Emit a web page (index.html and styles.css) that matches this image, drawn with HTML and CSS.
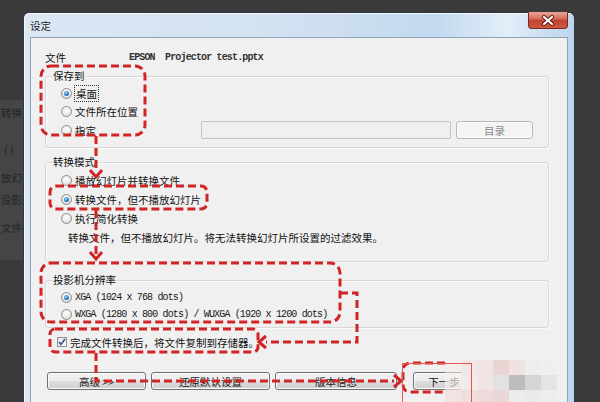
FILE: index.html
```html
<!DOCTYPE html>
<html>
<head>
	<meta charset="utf-8">
	<title>设定</title>
	<link rel="stylesheet" href="styles.css">
</head>
<body>
	<div class="desk">
		<div class="behind">
			<p class="b1">转换</p>
			<p class="b2">( )</p>
			<p class="b3">放幻</p>
			<p class="b4">设影</p>
			<p class="b5">文件</p>
		</div>
		<div class="window">
			<div class="titlebar">
				<span class="title">设定</span>
				<span class="close">
					<svg width="14" height="11" viewBox="0 0 14 11">
						<path d="M3 2L11 9M11 2L3 9" stroke="#5a1a10" stroke-width="4" stroke-linecap="round"/>
						<path d="M3 2L11 9M11 2L3 9" stroke="#fff" stroke-width="2.2" stroke-linecap="round"/>
					</svg>
				</span>
			</div>
			<div class="client">
				<div class="filerow">
					<span class="filelabel">文件</span>
					<span class="mono">EPSON  Projector test.pptx</span>
				</div>

				<div class="group g1">
					<div class="legend">保存到</div>
					<div class="row"><span class="radio on"></span><span class="focus">桌面</span></div>
					<div class="row"><span class="radio"></span>文件所在位置</div>
					<div class="row r3"><span class="radio"></span>指定<span class="textbox"></span><span class="btn off">目录</span></div>
				</div>

				<div class="group g2">
					<div class="legend">转换模式</div>
					<div class="row"><span class="radio"></span>播放幻灯片并转换文件</div>
					<div class="row"><span class="radio on"></span>转换文件，但不播放幻灯片</div>
					<div class="row"><span class="radio"></span>执行简化转换</div>
					<div class="row desc">转换文件，但不播放幻灯片。将无法转换幻灯片所设置的过滤效果。</div>
				</div>

				<div class="group g3">
					<div class="legend">投影机分辨率</div>
					<div class="row"><span class="radio on"></span><span class="mono">XGA (1024 x 768 dots)</span></div>
					<div class="row"><span class="radio"></span><span class="mono">WXGA (1280 x 800 dots) / WUXGA (1920 x 1200 dots)</span></div>
				</div>

				<div class="checkrow">
					<span class="check">
						<svg width="8" height="8" viewBox="0 0 8 8"><path d="M1 4L3 6.5L7 1" fill="none" stroke="#3b4f8c" stroke-width="1.6"/></svg>
					</span>
					完成文件转换后，将文件复制到存储器。
				</div>

				<div class="buttons">
					<span class="btn w1">高级 &gt;&gt;</span>
					<span class="btn w2">还原默认设置</span>
					<span class="btn w3">版本信息</span>
					<span class="btn w4">下一步</span>
				</div>
			</div>
		</div>
	</div>

	<div class="mosaic">
		<i style="background:rgba(250,236,236,.55)"></i><i style="background:#f3e6e6"></i><i style="background:#f1e3e3"></i><i style="background:#ead3d3"></i><i style="background:#f0e2e2"></i><i style="background:#ededed"></i><i style="background:#efefef"></i>
		<i style="background:rgba(250,240,240,.65)"></i><i style="background:#f4eaea"></i><i style="background:#f1e4e4"></i><i style="background:#e2e2e2"></i><i style="background:#bdbdbd"></i><i style="background:#d5d5d5"></i><i style="background:#e4e4e4"></i>
		<i style="background:#f3e3e3"></i><i style="background:#f0dddd"></i><i style="background:#eedada"></i><i style="background:#e9d6d6"></i><i style="background:#ececec"></i><i style="background:#eaeaea"></i><i style="background:#ededed"></i>
	</div>

	<svg class="marks" width="600" height="402" viewBox="0 0 600 402">
		<g fill="none" stroke="#d12424" stroke-width="3" stroke-dasharray="8 4">
			<rect x="41" y="66" width="104" height="69" rx="10"/>
			<path d="M96 136V172"/>
			<rect x="50" y="186" width="157" height="23" rx="6"/>
			<path d="M96 210V254"/>
			<rect x="41" y="263" width="299" height="59" rx="10"/>
			<path d="M340 293H357V342H266"/>
			<rect x="50" y="329" width="208" height="23" rx="5"/>
			<path d="M96 353V381H394"/>
			<path d="M445 363H411Q403 363 403 371V384Q403 392 411 392H445"/>
		</g>
		<g fill="none" stroke="#d12424" stroke-width="3">
			<path d="M90 170L96 177L102 170"/>
			<path d="M90 252L96 259L102 252"/>
			<path d="M266 336L259 342L266 348"/>
			<path d="M394 375L401 381L394 387"/>
		</g>
		<rect x="402.5" y="363.5" width="69" height="45" fill="none" stroke="#e25656"/>
	</svg>
</body>
</html>
```

FILE: styles.css
```css
* {
	box-sizing: border-box;
}
body {
	margin: 0;
	width: 600px; height: 402px;
	overflow: hidden; position: relative;
	background: #3a3a3a;
	font-family: "Noto Sans CJK SC", sans-serif;
	font-size: 10.5px; color: #111;
}
.desk {
	display: flex;
	padding-top: 12px;
	height: 402px;
}

/* desktop text behind the dialog */
.behind {
	width: 23px; flex: none;
	margin-top: 88px; height: 160px;
	background: #454545; color: #242424;
	overflow: hidden;
}
.behind p {
	margin: 0;
	height: 14px; line-height: 14px;
	white-space: nowrap;
}
.b1 { margin-top: 6px !important; padding-left: 1px; }
.b2 { margin-top: 23px !important; padding-left: 4px; }
.b3 { margin-top: 14px !important; padding-left: 1px; }
.b4 { margin-top: 8px !important; padding-left: 1px; }
.b5 { margin-top: 14px !important; padding-left: 1px; }

/* window frame */
.window {
	width: 552px; flex: none;
	height: 400px;
	border: 1px solid #2f3944; border-bottom: none;
	border-radius: 6px 6px 0 0;
	padding: 0 6px;
	background: linear-gradient(to right, #dbe7f3 0%, #d3e2f1 45%, #c3d9ef 75%, #e2eef9 88%, #bcd4ec 100%);
	box-shadow: inset 1px 1px 0 #f4f8fc;
	display: flex; flex-direction: column;
}
.titlebar {
	height: 24px; flex: none;
	display: flex; align-items: center;
}
.title {
	font-size: 10.5px; color: #1a1a1a;
}
.close {
	margin-left: auto; align-self: flex-start;
	margin-top: -1px;
	width: 40px; height: 17px;
	border: 1px solid #7a2a20; border-top: none;
	border-radius: 0 0 4px 4px;
	background: linear-gradient(#e9a596 0%, #d6705e 40%, #c2412e 55%, #cf5a44 100%);
	display: flex; align-items: center; justify-content: center;
}
.close svg {
	display: block;
}

.client {
	flex: 1;
	border: 1px solid #8fa4ba;
	background: #f0f0f0;
	padding: 0 18px 0 14px;
}
.filerow {
	margin-top: 10px; height: 18px;
	display: flex; align-items: center;
}
.filelabel {
	width: 84px;
}
.mono {
	font-family: "Liberation Mono", monospace;
	font-size: 10px; letter-spacing: -0.85px;
	white-space: pre; color: #1a1a1a;
}
.filerow .mono {
	font-weight: bold; color: #333;
}

/* group boxes */
.group {
	border: 1px solid #d7d7d7;
	border-radius: 3px;
	padding: 0 15px;
	box-shadow: inset 1px 1px 0 #fbfbfb, 1px 1px 0 #fbfbfb;
}
.legend {
	width: fit-content;
	margin: -8px 0 0 -9px;
	padding: 0 1px;
	height: 14px; line-height: 14px;
	background: #f0f0f0;
}
.row {
	display: flex; align-items: center;
	height: 18px;
	white-space: nowrap;
}
.g1 { margin-top: 10px; padding-bottom: 7px; }
.g1 .legend + .row { margin-top: 1px; }
.g1 .r3 { height: 20px; }
.g2 { margin-top: 14px; padding-bottom: 14px; }
.g2 .row { height: 19px; }
.g2 .legend + .row { margin-top: 2px; }
.g2 .desc { padding-left: 7px; }
.g3 { margin-top: 18px; padding-bottom: 4px; }
.g3 .row { height: 17px; }
.g3 .legend + .row { margin-top: 2px; }

.radio {
	flex: none;
	width: 11px; height: 11px;
	margin-right: 3px;
	border: 1px solid #8c8c8c; border-radius: 50%;
	background: radial-gradient(circle at 50% 35%, #ffffff 0%, #e9e9e9 55%, #cfcfcf 100%);
}
.radio.on:after {
	content: '';
	display: block;
	width: 5px; height: 5px; margin: 2px;
	border-radius: 50%;
	background: radial-gradient(circle at 40% 35%, #9ad6ff 0%, #2f80c8 55%, #0e3f78 100%);
}
.focus {
	outline: 1px dotted #333;
	outline-offset: 0;
	padding: 0 1px;
}
.textbox {
	margin-left: auto;
	width: 250px; height: 18px;
	border: 1px solid #c4c4c4; border-radius: 2px;
	background: #f0f0f0;
}

/* buttons */
.btn {
	height: 18px;
	display: flex; align-items: center; justify-content: center;
	border: 1px solid #707070; border-radius: 3px;
	background: linear-gradient(#f3f3f3 0%, #ebebeb 48%, #dddddd 52%, #cfcfcf 100%);
	box-shadow: inset 0 0 0 1px #fbfbfb;
	color: #1a1a1a;
}
.btn.off {
	width: 77px; margin-left: 5px;
	border-color: #b4b8bb;
	background: #f4f4f4;
	color: #8a8a8a;
}
.checkrow {
	margin-top: 6px; height: 16px;
	padding-left: 12px;
	display: flex; align-items: center;
	white-space: nowrap;
}
.check {
	width: 10px; height: 10px;
	margin-right: 3px;
	border: 1px solid #8e8f8f;
	background: linear-gradient(135deg, #e3e6ea, #fdfdfd);
	display: flex; align-items: center; justify-content: center;
}
.check svg {
	display: block;
}
.buttons {
	margin-top: 22px;
	padding-left: 2px;
	display: flex; gap: 5px;
}
.w1 { width: 99px; }
.w2 { width: 119px; }
.w3 { width: 122px; }
.w4 { width: 62px; margin-left: 11px; }

/* overlays */
.mosaic {
	position: absolute;
	left: 445px; top: 360px;
	display: grid;
	grid-template-columns: repeat(7, 16px);
	grid-auto-rows: 15px;
}
.mosaic i {
	display: block;
}
.marks {
	position: absolute;
	left: 0; top: 0;
	pointer-events: none;
}
```
